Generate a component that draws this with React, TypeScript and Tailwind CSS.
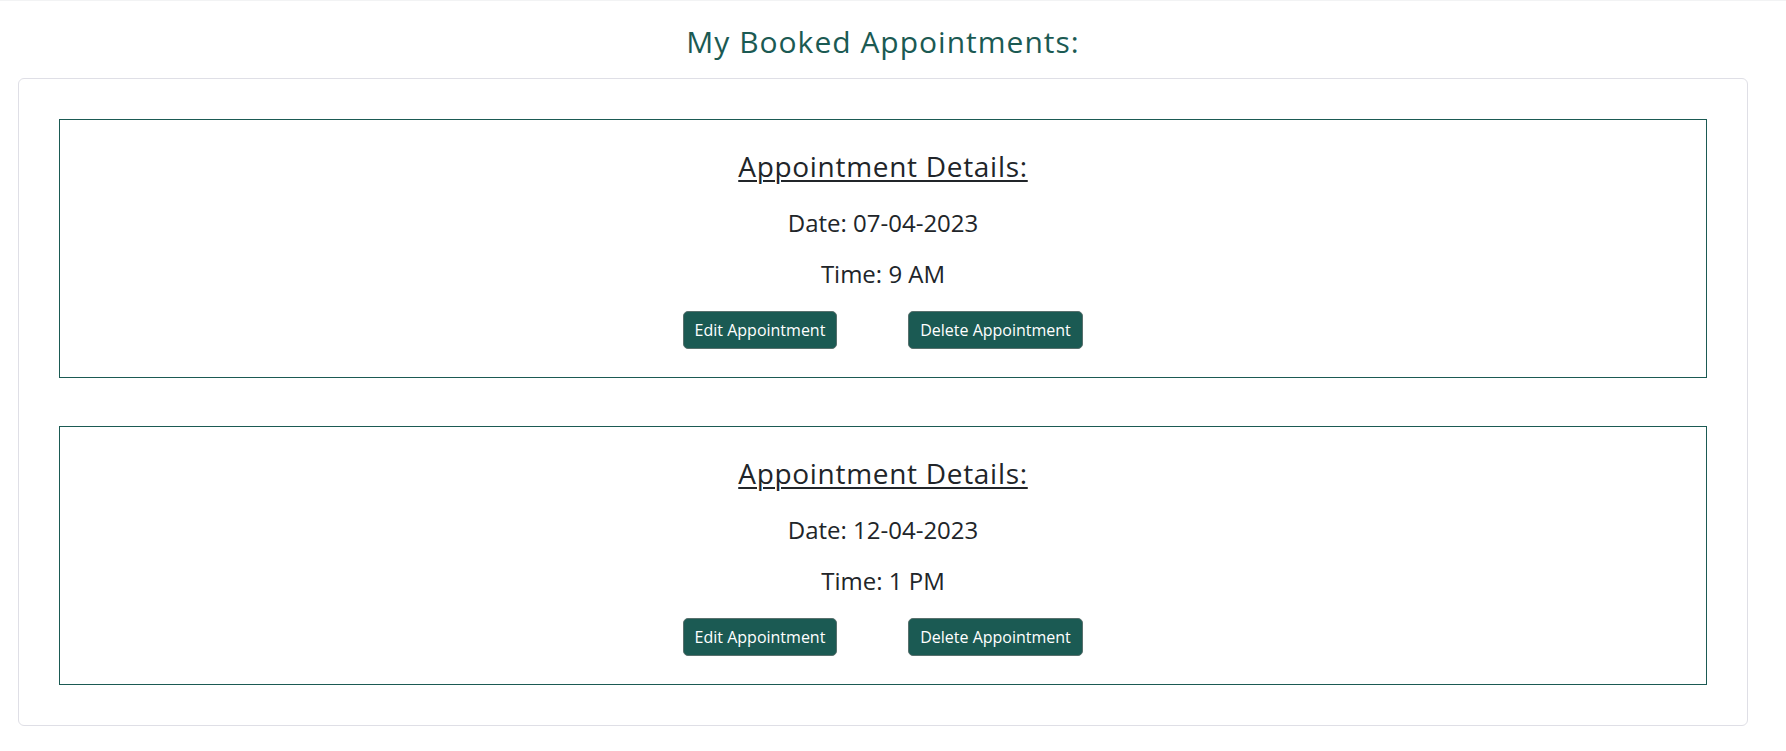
import React from "react";

const appointments = [
  { date: "07-04-2023", time: "9 AM" },
  { date: "12-04-2023", time: "1 PM" },
];

function AppointmentBox({ date, time }: { date: string; time: string }) {
  return (
    <div className="border border-[#1b5a53] pt-[29px] pb-[28px] flex flex-col items-center text-[#212529]">
      <h3 className="text-[28px] leading-[34px] tracking-[0.7px] underline decoration-[2px] underline-offset-[3px]">
        Appointment Details:
      </h3>
      <p className="mt-[25px] text-[24px] leading-[29px]">Date: {date}</p>
      <p className="mt-[22px] text-[24px] leading-[29px]">Time: {time}</p>
      <div className="mt-[23px] flex justify-center gap-[71px]">
        <button className="w-[154px] h-[38px] rounded-[5px] border border-[#58706d] bg-[#1b5a53] text-white text-[16px] leading-none">
          Edit Appointment
        </button>
        <button className="w-[175px] h-[38px] rounded-[5px] border border-[#58706d] bg-[#1b5a53] text-white text-[16px] leading-none">
          Delete Appointment
        </button>
      </div>
    </div>
  );
}

export default function App() {
  return (
    <div className="min-h-screen w-full bg-white font-['Open_Sans',sans-serif]">
      <div className="h-px bg-[#f2f3f4]" />
      <div className="ml-[18px] mr-[38px]">
        <h2 className="mt-[23px] text-center text-[30px] leading-[36px] tracking-[1px] text-[#1b5a53]">
          My Booked Appointments:
        </h2>
        <div className="mt-[18px] rounded-[6px] border border-[#dfdfe6] p-[40px] flex flex-col gap-[48px]">
          {appointments.map((a, i) => (
            <AppointmentBox key={i} date={a.date} time={a.time} />
          ))}
        </div>
      </div>
    </div>
  );
}
